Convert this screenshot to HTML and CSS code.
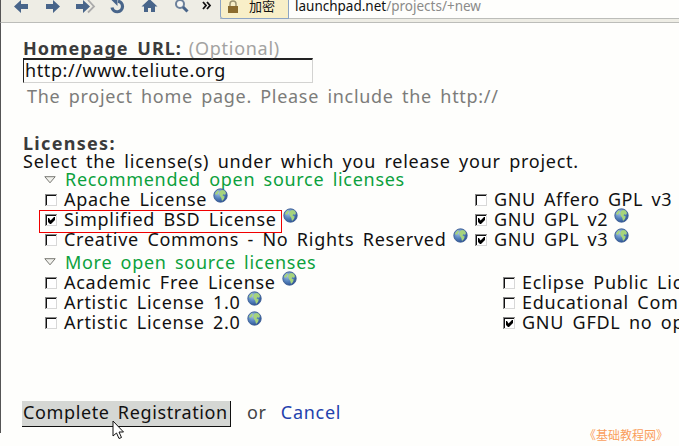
FILE: index.html
```html
<!DOCTYPE html>
<html lang="en">
<head>
<meta charset="utf-8">
<title>Register a project</title>
<link rel="stylesheet" href="styles.css">
</head>
<body>
<svg class="defs" width="0" height="0">
  <defs>
    <radialGradient id="sea" cx="35%" cy="30%" r="75%">
      <stop offset="0" stop-color="#a9c4e4"/><stop offset=".55" stop-color="#5583bd"/><stop offset="1" stop-color="#2d5191"/>
    </radialGradient>
    <symbol id="globe" viewBox="0 0 15 15">
      <circle cx="7.5" cy="7.5" r="6.700" fill="url(#sea)" stroke="#3d5f94" stroke-width=".9"/>
      <path d="M2 5.500 4.500 2.500 6 3 5 5.500 3 7zM7 3 9 2 11.500 2.600 13 5 12 7 10.500 6 9.500 7.500 11.700 8.500 11 11 9 13 8.300 10 7 8 6.200 6z" fill="#a6d47c"/>
    </symbol>
    <symbol id="off" viewBox="0 0 12 12">
      <path d="M0 0h12v12H0z" fill="#d8d8d8"/><path d="M0 0h12v1H1v11H0z" fill="#888"/><path d="M1 1h10v10H1z" fill="#fff"/><path d="M1 1h10v1H2v9H1z" fill="#111"/>
    </symbol>
    <symbol id="on" viewBox="0 0 12 12">
      <use href="#off"/><path d="M3 4v4l2 2h1l4-4V3H9L5.500 6.500 4 4z" fill="#000"/>
    </symbol>
    <symbol id="tri" viewBox="0 0 12 8">
      <path d="M.8.7h10.400L6 6.800z" fill="#f1f1ec" stroke="#777772"/>
    </symbol>
  </defs>
</svg>
<header class="toolbar">
  <svg class="tools" width="220" height="18" viewBox="0 0 220 18">
    <g fill="#48658a">
      <path d="M14 6.500 21 0v4h7v5h-7v4z"/>
      <path d="M60 6.500 53 0v4h-7v5h7v4z"/>
      <path d="M90 6.500 83 0v4h-7v5h7v4z"/>
      <path d="M141.500 6.500 149.500-1 157.500 6.500H155V12h-4V8h-3v4h-4V6.500z"/>
    </g>
    <path d="m88 0 6 6.500-6 6" fill="none" stroke="#aaa" stroke-width="1.800"/>
    <path d="M112 7.500A5.300 5.300 0 1 0 118 1.200" fill="none" stroke="#48658a" stroke-width="3.200"/>
    <path d="M110.500-1h7v7z" fill="#48658a"/>
    <circle cx="180" cy="4" r="4" fill="#f7f7f4" stroke="#6c819b" stroke-width="2"/>
    <path d="m183 7 4.500 4.500" stroke="#48658a" stroke-width="3"/>
    <path d="m203 2 3 3.500-3 3.500m4-7 3 3.500-3 3.500" fill="none" stroke="#111" stroke-width="1.800"/>
  </svg>
  <div class="address">
    <div class="secure">
      <svg width="10" height="14" viewBox="0 0 10 14"><path d="M2 8V4a3 3 0 0 1 6 0v4" fill="none" stroke="#9c9472" stroke-width="1.500"/><path d="M0 6h10v7H0z" fill="#8b6c2f"/></svg>
      <span>加密</span>
    </div>
    <div class="url"><b>launchpad.net</b>/projects/+new</div>
  </div>
</header>
<main class="page">
  <div class="line title"><strong>Homepage URL:</strong><span class="optional">(Optional)</span></div>
  <div class="field">http://www.teliute.org</div>
  <div class="help">The project home page. Please include the http://</div>
  <div class="line licenses"><strong>Licenses:</strong></div>
  <div class="select">Select the license(s) under which you release your project.</div>
  <div class="group first"><svg width="12" height="8"><use href="#tri"/></svg><span>Recommended open source licenses</span></div>
  <div class="grid">
    <div class="item"><svg class="box"><use href="#off"/></svg><span>Apache License</span><svg class="globe"><use href="#globe"/></svg></div>
    <div class="item gnu"><svg class="box"><use href="#off"/></svg><span>GNU Affero GPL v3</span></div>
    <div class="item marked"><svg class="box"><use href="#on"/></svg><span>Simplified BSD License</span><svg class="globe"><use href="#globe"/></svg></div>
    <div class="item gnu"><svg class="box"><use href="#on"/></svg><span>GNU GPL v2</span><svg class="globe"><use href="#globe"/></svg></div>
    <div class="item"><svg class="box"><use href="#off"/></svg><span>Creative Commons - No Rights Reserved</span><svg class="globe"><use href="#globe"/></svg></div>
    <div class="item gnu"><svg class="box"><use href="#on"/></svg><span>GNU GPL v3</span><svg class="globe"><use href="#globe"/></svg></div>
  </div>
  <div class="group second"><svg width="12" height="8"><use href="#tri"/></svg><span>More open source licenses</span></div>
  <div class="grid more">
    <div class="item"><svg class="box"><use href="#off"/></svg><span>Academic Free License</span><svg class="globe"><use href="#globe"/></svg></div>
    <div class="item"><svg class="box"><use href="#off"/></svg><span>Eclipse Public License</span></div>
    <div class="item"><svg class="box"><use href="#off"/></svg><span>Artistic License 1.0</span><svg class="globe"><use href="#globe"/></svg></div>
    <div class="item"><svg class="box"><use href="#off"/></svg><span>Educational Community</span></div>
    <div class="item"><svg class="box"><use href="#off"/></svg><span>Artistic License 2.0</span><svg class="globe"><use href="#globe"/></svg></div>
    <div class="item"><svg class="box"><use href="#on"/></svg><span>GNU GFDL no options</span></div>
  </div>
  <div class="actions">
    <div class="submit">Complete Registration</div><span class="or">or</span><a class="cancel">Cancel</a>
  </div>
</main>
<svg class="cursor" width="13" height="20" viewBox="0 0 13 20"><path d="M1 1v15l3.500-3 2.500 5.500 2.500-1L7 12h4.500z" fill="#fff" stroke="#111"/></svg>
<footer class="mark">《基础教程网》</footer>
</body>
</html>
```

FILE: styles.css
```css
* { box-sizing: border-box; }
html { overflow: hidden; }
body {
  margin: 0;
  width: 679px;
  height: 446px;
  overflow: hidden;
  position: relative;
  background: #fefefc;
  color: #111;
  font: 18px/20px "Noto Sans", "Noto Sans CJK SC", sans-serif;
  letter-spacing: .73px;
  word-spacing: 3px;
}
.defs { position: absolute; }
.toolbar {
  display: flex;
  height: 23px;
  background: #eeede5;
  border-bottom: 1px solid #bcbdb9;
  border-left: 1px solid #555;
}
.tools { flex: none; margin-left: -1px; }
.address {
  display: flex;
  flex: 1;
  height: 19px;
  background: #fefefc;
  border-bottom: 1px solid #bcbdb9;
  letter-spacing: 0;
  word-spacing: 0;
}
.secure {
  display: flex;
  width: 69px;
  height: 19px;
  padding-left: 7px;
  gap: 11px;
  background: #f8efc8;
  border: 1px solid #8da5c4;
  border-top: 0;
  border-radius: 0 0 0 3px;
  font: 13px/13px "Noto Sans CJK SC", sans-serif;
}
.secure span { height: 13px; margin-top: -1px; white-space: nowrap; }
.url {
  margin-left: 6px;
  font-size: 13.500px;
  line-height: 13px;
  color: #8b8b89;
  white-space: nowrap;
}
.url b { font-weight: 400; color: #111; }
.page {
  height: 410px;
  padding: 15px 0 0 22px;
  overflow: hidden;
  border-left: 1px solid #555;
  white-space: nowrap;
}
.line { display: flex; height: 20px; }
.line strong { letter-spacing: 1px; color: #3b3b3b; }
.licenses strong { letter-spacing: 1.300px; }
.optional { margin-left: 7px; color: #a3a3a1; }
.field {
  width: 290px;
  height: 25px;
  padding-left: 1px;
  line-height: 21px;
  letter-spacing: .6px;
  border: 1px solid #d3d3d1;
  border-top: 2px solid #222;
  border-left: 1px solid #222;
}
.help { margin: 3px 0 0 4px; letter-spacing: .7px; color: #7c7c7a; }
.licenses { margin-top: 27px; }
.select { height: 18px; line-height: 16px; letter-spacing: .75px; }
.group {
  display: flex;
  align-items: center;
  gap: 9px;
  margin-left: 21px;
  letter-spacing: .7px;
  color: #0ca13d;
}
.first { height: 18px; }
.first span { margin-top: -2px; }
.second { height: 23px; margin-top: 1px; }
.grid {
  display: grid;
  grid-template-columns: 430px 300px;
  grid-auto-rows: 20px;
  width: 656px;
  margin-left: 22px;
}
.more { grid-template-columns: 458px 300px; }
.more .item { top: -1px; }
.item { display: flex; align-items: center; position: relative; }
.gnu { letter-spacing: .6px; }
.box { width: 12px; height: 12px; margin: 1px 7px 0 0; flex: none; }
.globe { width: 15px; height: 15px; margin: 0 0 7px 6px; flex: none; }
.marked::after {
  content: "";
  position: absolute;
  left: -6px;
  top: 1px;
  width: 241px;
  height: 21px;
  border: 1px solid #f00000;
}
.actions { display: flex; margin: 68px 0 0 -1px; }
.submit {
  width: 209px;
  height: 26px;
  padding: 0 0 0 1px;
  line-height: 22px;
  letter-spacing: .62px;
  background: #d5d7d4;
  border-right: 1px solid #111;
  border-bottom: 1px solid #111;
}
.or, .cancel { line-height: 22px; color: #444; }
.or { margin-left: 16px; }
.cancel { margin-left: 14px; color: #1f42ad; }
.cursor { position: absolute; left: 112px; top: 420px; }
.mark {
  position: absolute;
  left: 584px;
  top: 426px;
  font: 12px/17px "Noto Sans CJK SC", sans-serif;
  letter-spacing: 0;
  color: #fa9e5c;
}
```
